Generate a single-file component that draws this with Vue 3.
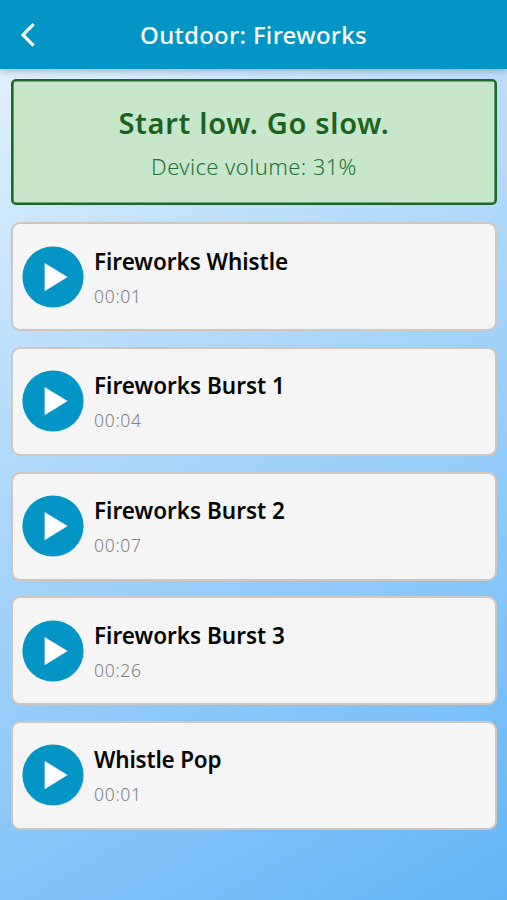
<script setup>
const sounds = [
  { title: 'Fireworks Whistle', time: '00:01', fit: 'long' },
  { title: 'Fireworks Burst 1', time: '00:04', fit: 'regular' },
  { title: 'Fireworks Burst 2', time: '00:07', fit: 'regular' },
  { title: 'Fireworks Burst 3', time: '00:26', fit: 'regular' },
  { title: 'Whistle Pop', time: '00:01', fit: 'short' },
]
</script>

<template>
  <div class="screen">
    <header class="bar">
      <button class="back" aria-label="Back">
        <svg width="16" height="26" viewBox="0 0 16 26">
          <path d="M13.6 2.2 3 12.9 13.6 23.6" fill="none" stroke="#fff" stroke-width="3.2" />
        </svg>
      </button>
      <h1>Outdoor: Fireworks</h1>
    </header>
    <main>
      <section class="notice">
        <h2>Start low. Go slow.</h2>
        <p>Device volume: 31%</p>
      </section>
      <ul class="list">
        <li v-for="s in sounds" :key="s.title" class="card">
          <svg class="play" width="62" height="62" viewBox="0 0 62 62">
            <circle cx="31" cy="31" r="30.6" fill="#0295c5" />
            <path d="M22.6 16.9v28.4L45.6 31.1z" fill="#fff" />
          </svg>
          <div class="info">
            <h3 :class="s.fit">{{ s.title }}</h3>
            <time>{{ s.time }}</time>
          </div>
        </li>
      </ul>
    </main>
  </div>
</template>

<style>
body {
  margin: 0;
}
</style>

<style scoped>
.screen {
  height: 900px;
  box-sizing: border-box;
  overflow: hidden;
  font-family: "Noto Sans", "Open Sans", sans-serif;
  background: linear-gradient(150deg, #e3f2fd 4%, #bbdefb 32%, #90caf9 65%, #64b5f6 100%);
}
h1, h2, h3, p, ul {
  margin: 0;
  padding: 0;
  white-space: nowrap;
}
.bar {
  height: 69px;
  display: grid;
  grid-template-columns: 60px 1fr 60px;
  align-items: center;
  background: #0295c5;
  box-shadow: 0 1px 8px rgba(70, 70, 110, 0.45);
}
.back {
  border: 0;
  padding: 1px 0 0 20px;
  background: none;
  display: flex;
}
h1 {
  color: #fff;
  font-size: 24px;
  line-height: 34px;
  font-weight: 500;
  text-align: center;
  letter-spacing: 0.3px;
}
main {
  padding: 10px 10px 0 11px;
}
.notice {
  height: 126px;
  box-sizing: border-box;
  border: 2px solid #1f6729;
  box-shadow: inset 0 0 0 0.6px #1f6729;
  border-radius: 5px;
  background: #c8e6c9;
  text-align: center;
  padding-top: 21px;
}
h2 {
  color: #1b611f;
  font-size: 29px;
  line-height: 42px;
  font-weight: 600;
  letter-spacing: 0.7px;
}
.notice p {
  color: #2a7034;
  font-size: 22px;
  line-height: 30px;
  margin-top: 7px;
  font-weight: 300;
  letter-spacing: 0.4px;
}
.list {
  list-style: none;
  display: grid;
  gap: 15.6px;
  margin-top: 17.4px;
}
.card {
  height: 109px;
  box-sizing: border-box;
  border: 2px solid #cfc6c0;
  border-radius: 9px;
  background: #f5f5f5;
  display: flex;
  align-items: center;
  padding-left: 9px;
}
.play {
  flex: none;
  margin-left: -0.5px;
}
.info {
  margin-left: 10.5px;
}
h3 {
  color: #050505;
  font-size: 22.5px;
  line-height: 32px;
  font-weight: 600;
}
.long {
  letter-spacing: -0.05px;
}
.short {
  letter-spacing: -0.2px;
}
time {
  display: block;
  color: #808080;
  font-size: 17.5px;
  line-height: 24px;
  margin-top: 6px;
  font-weight: 300;
  letter-spacing: 0.7px;
}
</style>
